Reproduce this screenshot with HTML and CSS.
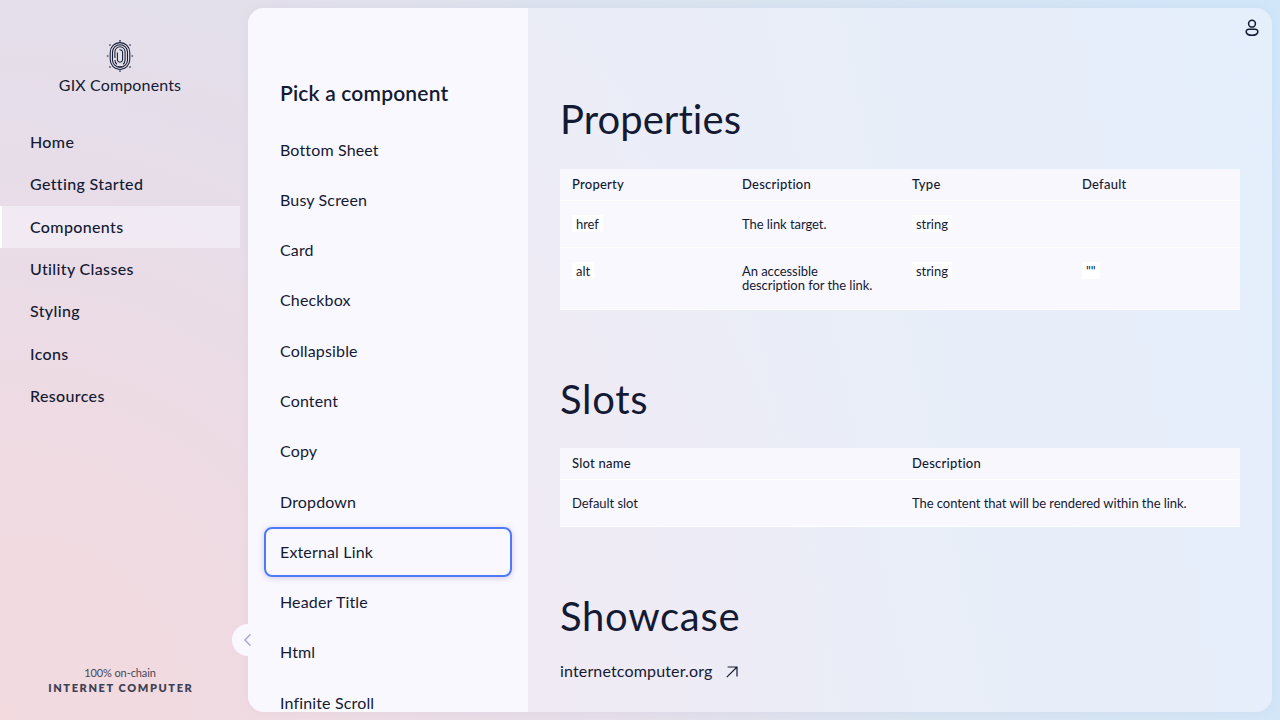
FILE: index.html
```html
<!DOCTYPE html>
<html lang="en">
<head>
<meta charset="utf-8">
<title>GIX Components</title>
<link rel="stylesheet" href="styles.css">
</head>
<body>
<div class="app">
  <aside class="menu">
    <div class="brand">
      <svg class="logo" width="28" height="32" viewBox="0 0 28 32" fill="none" stroke="currentColor" stroke-width="1.05">
        <rect x="4.200" y="2.600" width="19.600" height="26.800" rx="9.800"/>
        <path d="M6.500 20v-8a7.500 7.300 0 0 1 15 0v8a7.500 7.300 0 0 1-15 0"/>
        <path d="M11 24.400c-1.500-1.200-2.100-2.500-2.100-4.400M8.900 18v-6a5.100 5.300 0 0 1 10.200 0v8c0 2-.8 3.500-2.100 4.400"/>
        <path d="M11.400 12.500v7.700a2.700 2.700 0 0 0 5.200 0V12a2.700 2.700 0 0 0-3.200-2.200"/>
        <path d="M11.500 26.900h5"/>
        <g fill="currentColor" stroke="none"><circle cx="14" cy=".9" r=".8"/><circle cx="14" cy="31.100" r=".8"/><circle cx="1.700" cy="16" r=".8"/><circle cx="26.300" cy="16" r=".8"/><circle cx="4" cy="5" r=".8"/><circle cx="24" cy="5" r=".8"/><circle cx="4" cy="27" r=".8"/><circle cx="24" cy="27" r=".8"/></g>
      </svg>
      <span class="brand-name">GIX Components</span>
    </div>
    <nav class="nav">
      <a class="nav-item">Home</a>
      <a class="nav-item">Getting Started</a>
      <a class="nav-item selected">Components</a>
      <a class="nav-item">Utility Classes</a>
      <a class="nav-item">Styling</a>
      <a class="nav-item">Icons</a>
      <a class="nav-item">Resources</a>
    </nav>
    <div class="onchain">
      <span class="onchain-top">100% on-chain</span>
      <span class="onchain-name">INTERNET COMPUTER</span>
    </div>
    <button class="collapse" aria-label="Collapse menu">
      <svg width="20" height="20" viewBox="0 0 20 20" fill="none" stroke="currentColor" stroke-width="1.500"><path d="M14.500 4.300 9 10l5.500 5.700"/></svg>
    </button>
  </aside>
  <div class="panel">
    <section class="picker">
      <h2 class="picker-title">Pick a component</h2>
      <div class="picker-list">
        <a class="entry">Bottom Sheet</a>
        <a class="entry">Busy Screen</a>
        <a class="entry">Card</a>
        <a class="entry">Checkbox</a>
        <a class="entry">Collapsible</a>
        <a class="entry">Content</a>
        <a class="entry">Copy</a>
        <a class="entry">Dropdown</a>
        <a class="entry current">External Link</a>
        <a class="entry">Header Title</a>
        <a class="entry">Html</a>
        <a class="entry">Infinite Scroll</a>
      </div>
    </section>
    <main class="content">
      <button class="account" aria-label="Account">
        <svg width="20" height="20" viewBox="0 0 20 20" fill="none" stroke="currentColor" stroke-width="1.500"><circle cx="10" cy="5.700" r="3.400"/><path d="M7 11.200h6c4.200 0 4.200 6.100-3 6.100s-7.200-6.100-3-6.100Z"/></svg>
      </button>
      <h1 class="title">Properties</h1>
      <div class="table">
        <div class="row four head"><span>Property</span><span>Description</span><span>Type</span><span>Default</span></div>
        <div class="row four"><span><code>href</code></span><span>The link target.</span><span><code>string</code></span><span></span></div>
        <div class="row four tall"><span><code>alt</code></span><span>An accessible<br>description for the link.</span><span><code>string</code></span><span><code>""</code></span></div>
      </div>
      <h1 class="title slots">Slots</h1>
      <div class="table">
        <div class="row two head"><span>Slot name</span><span>Description</span></div>
        <div class="row two"><span>Default slot</span><span>The content that will be rendered within the link.</span></div>
      </div>
      <h1 class="title showcase">Showcase</h1>
      <a class="link">internetcomputer.org
        <svg width="20" height="20" viewBox="0 0 20 20" fill="none" stroke="currentColor" stroke-width="1.200"><path d="M4.800 15.200 15 5M5.600 5H15v9.400"/></svg>
      </a>
    </main>
  </div>
</div>
</body>
</html>
```

FILE: styles.css
```css
* { box-sizing: border-box; }
body {
  margin: 0;
  font: 16px/18.28px Lato, "Open Sans", sans-serif;
  color: #141a33;
  letter-spacing: .15px;
  overflow: hidden;
}
button { padding: 0; border: 0; background: none; color: inherit; }
svg { display: block; flex: none; }
.app {
  display: flex;
  height: 720px;
  background:
    radial-gradient(circle at 0 100%, #f2dadf 0, rgba(240,218,225,.95) 18%, rgba(232,220,232,.8) 38%, rgba(226,224,236,0) 62%),
    linear-gradient(78deg, #e2e1ed 0, #dfe1ec 30%, #d8e4f1 68%, #d0e6f9 100%);
}
.menu { position: relative; width: 248px; height: 720px; display: flex; flex-direction: column; }
.brand { padding-top: 40px; width: 240px; display: flex; flex-direction: column; align-items: center; }
.brand-name { margin-top: 4px; }
.nav { width: 240px; margin-top: 26.9px; }
.nav-item {
  display: block;
  height: 42.28px;
  padding: 12px 28px;
  border-left: 2px solid transparent;
  font-weight: 500;
  letter-spacing: .35px;
}
.selected { background: rgba(249,248,255,.5); border-color: #fff; }
.onchain {
  width: 240px;
  margin-top: auto;
  padding-bottom: 25px;
  display: flex;
  flex-direction: column;
  align-items: center;
  opacity: .8;
}
.onchain-top { font-size: 11px; line-height: 16px; letter-spacing: -.1px; }
.onchain-name { font-size: 11px; line-height: 14px; font-weight: 800; letter-spacing: 1.6px; margin-right: -1.6px; }
.collapse {
  position: absolute;
  left: 232px;
  top: 624px;
  width: 32px;
  height: 32px;
  border-radius: 50%;
  background: #f9f8ff;
  color: #ada5de;
  z-index: 2;
}
.collapse svg { margin-left: 4px; }
.panel {
  display: flex;
  width: 1024px;
  height: 704px;
  margin-top: 8px;
  border-radius: 16px;
  overflow: hidden;
  background: rgba(249,248,255,.5);
  box-shadow: 0 0 10px rgba(80,60,140,.035);
}
.picker { width: 280px; height: 704px; padding: 72px 16px 0; background: #f9f8ff; overflow: hidden; }
.picker-title { margin: 0 16px; font-size: 21px; line-height: 26px; font-weight: 600; letter-spacing: .18px; white-space: nowrap; }
.picker-list { margin-top: 18.7px; }
.entry { display: block; height: 50.28px; padding: 16px; }
.current {
  padding: 14px;
  border: 2px solid #4f78fa;
  border-radius: 8px;
  box-shadow: 0 1px 6px rgba(95,47,130,.24);
}
.content { position: relative; flex: 1; padding: 88px 32px 0; }
.account { position: absolute; right: 10px; top: 10px; }
.title { margin: 0; font-size: 40px; line-height: 46px; font-weight: 400; letter-spacing: .05px; }
.table { width: 680px; margin-top: 27px; font-size: 13px; line-height: 14px; letter-spacing: -.05px; }
.row { display: grid; height: 47px; padding: 0 12px; border-bottom: 1px solid #fff; background: #f9f8ff; }
.row > span { padding-top: 16px; }
.four { grid-template-columns: repeat(4, 170px); }
.two { grid-template-columns: repeat(2, 340px); }
.head { height: 32px; background: #f8f7fd; font-weight: 500; letter-spacing: .25px; }
.head > span { padding-top: 8px; }
.tall { height: 62px; }
code { display: inline-block; height: 17px; margin-top: -2px; padding: 2px 4px; background: #fff; font-family: inherit; }
.slots { margin-top: 66px; letter-spacing: .7px; }
.slots + .table { margin-top: 26px; }
.showcase { margin-top: 66px; letter-spacing: .7px; }
.link { display: flex; align-items: center; gap: 10px; margin-top: 22.6px; }
```
